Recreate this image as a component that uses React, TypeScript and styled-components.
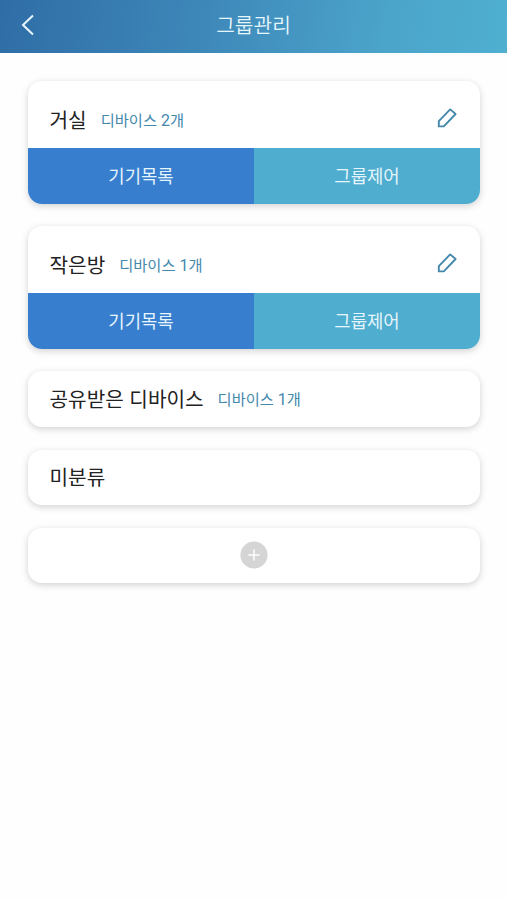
import React from 'react';
import styled, { createGlobalStyle } from 'styled-components';

const GlobalStyle = createGlobalStyle`
  * { box-sizing: border-box; }
  body {
    margin: 0;
    background: #fefefe;
    font-family: "Noto Sans CJK KR", sans-serif;
  }
  button { font: inherit; border: 0; padding: 0; background: none; }
`;

const Page = styled.div`
  min-height: 900px;
`;

const Header = styled.header`
  display: grid;
  grid-template-columns: 56px 1fr 56px;
  align-items: center;
  height: 53px;
  padding-bottom: 3px;
  background: linear-gradient(100deg, #2f6da6 0%, #3d86b8 38%, #4ba4ca 76%, #4fb0d0 100%);
`;

const BackButton = styled.button`
  display: flex;
  align-items: center;
  height: 50px;
  padding-left: 20px;
`;

const HeaderTitle = styled.h1`
  margin: 0;
  padding-bottom: 2px;
  font-size: 20.3px;
  font-weight: 350;
  line-height: 48px;
  text-align: center;
  color: #e4f5fb;
`;

const List = styled.main`
  display: flex;
  flex-direction: column;
  gap: 22.7px;
  padding: 28px 27px 0 28px;
`;

const Card = styled.section`
  overflow: hidden;
  border-radius: 14px;
  background: #fff;
  box-shadow: 0 2px 7px rgba(0, 0, 0, 0.18);
`;

const CardHead = styled.div<{ $tall?: boolean }>`
  display: flex;
  align-items: center;
  height: ${(p) => (p.$tall ? '67px' : '55.5px')};
  padding: ${(p) => (p.$tall ? '11px 22px 0' : '0 22px')};
`;

const GroupName = styled.h2`
  margin: 0 0 0 -0.5px;
  font-size: 20.2px;
  font-weight: 400;
  line-height: 30px;
  word-spacing: 1px;
  color: #222;
`;

const DeviceCount = styled.span`
  margin-left: 14px;
  font-size: 15.3px;
  line-height: 24px;
  word-spacing: 0.5px;
  color: #4488ac;
`;

const Digits = styled.span`
  font-family: Roboto, sans-serif;
  font-size: 16px;
`;

const EditButton = styled.button`
  display: flex;
  margin: -4px 0 0 auto;
`;

const Actions = styled.div`
  display: grid;
  grid-template-columns: 1fr 1fr;
`;

const Action = styled.button<{ $tone: 'list' | 'control' }>`
  height: 55.5px;
  padding-bottom: 2px;
  font-size: 17.8px;
  line-height: 52px;
  color: #e6f5fb;
  background: ${(p) => (p.$tone === 'list' ? '#387ecf' : '#4fadcf')};
`;

const AddButton = styled.button`
  display: flex;
  align-items: center;
  justify-content: center;
  width: 100%;
  height: 55.5px;
  padding-bottom: 1.5px;
`;

const BackIcon = () => (
  <svg width="16" height="24" viewBox="0 0 16 24" fill="none" stroke="#e8f6fc" strokeWidth="2">
    <path d="M13 2.5 3 12l10 9.5" />
  </svg>
);

const PencilIcon = () => (
  <svg width="22" height="22" viewBox="0 0 22 22" fill="none" stroke="#4488ac" strokeWidth="1.9" strokeLinejoin="round">
    <path d="M14.2 2.4 19.6 7 7.8 19.4H2.8V14.2Z" />
  </svg>
);

const PlusIcon = () => (
  <svg width="28" height="28" viewBox="0 0 28 28">
    <circle cx="14" cy="14" r="13.6" fill="#d5d5d5" />
    <path d="M14 8.4v11.2M8.4 14h11.2" stroke="#fff" strokeWidth="1.5" />
  </svg>
);

interface Group {
  name: string;
  devices?: number;
  editable?: boolean;
}

const groups: Group[] = [
  { name: '거실', devices: 2, editable: true },
  { name: '작은방', devices: 1, editable: true },
  { name: '공유받은 디바이스', devices: 1 },
  { name: '미분류' },
];

const GroupCard = ({ name, devices, editable }: Group) => (
  <Card>
    <CardHead $tall={editable}>
      <GroupName>{name}</GroupName>
      {devices !== undefined && (
        <DeviceCount>
          디바이스 <Digits>{devices}</Digits>개
        </DeviceCount>
      )}
      {editable && (
        <EditButton aria-label="편집">
          <PencilIcon />
        </EditButton>
      )}
    </CardHead>
    {editable && (
      <Actions>
        <Action $tone="list">기기목록</Action>
        <Action $tone="control">그룹제어</Action>
      </Actions>
    )}
  </Card>
);

export default function App() {
  return (
    <Page>
      <GlobalStyle />
      <Header>
        <BackButton aria-label="뒤로">
          <BackIcon />
        </BackButton>
        <HeaderTitle>그룹관리</HeaderTitle>
      </Header>
      <List>
        {groups.map((group) => (
          <GroupCard key={group.name} {...group} />
        ))}
        <Card>
          <AddButton aria-label="그룹 추가">
            <PlusIcon />
          </AddButton>
        </Card>
      </List>
    </Page>
  );
}
